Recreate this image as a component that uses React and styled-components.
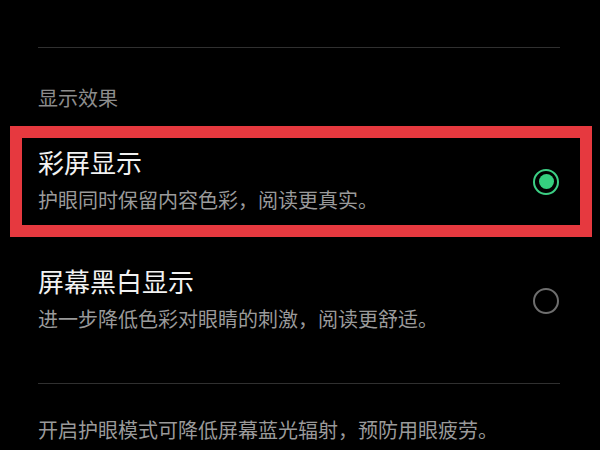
import React from 'react';
import styled, { createGlobalStyle } from 'styled-components';

const GlobalStyle = createGlobalStyle`
  html, body {
    margin: 0;
    padding: 0;
    background: #000;
  }
  body {
    font-family: "Noto Sans CJK SC", "Noto Sans", sans-serif;
  }
`;

const Page = styled.div`
  width: 600px;
  height: 450px;
  overflow: hidden;
  background: #000;
  padding-top: 47px;
  box-sizing: border-box;
`;

const Divider = styled.div`
  height: 1px;
  background: #303030;
  margin: ${(p) => (p.bottom ? '27px' : '0')} 40px 0 38px;
`;

const SectionTitle = styled.div`
  margin: 36px 0 14px 38px;
  font-size: 20px;
  line-height: 28px;
  color: #8c8c8c;
`;

const OptionList = styled.div`
  display: flex;
  flex-direction: column;
  gap: 8px;
  margin: 0 8px 0 10px;
`;

const Option = styled.div`
  display: flex;
  align-items: center;
  justify-content: space-between;
  height: 111px;
  box-sizing: border-box;
  border: 12px solid ${(p) => (p.highlighted ? '#e6393f' : 'transparent')};
  padding: 0 21px 0 16px;
`;

const OptionText = styled.div`
  display: flex;
  flex-direction: column;
  gap: 7px;
  margin-top: -4px;
`;

const OptionTitle = styled.div`
  font-size: 26px;
  line-height: 34px;
  color: #f2f2f2;
`;

const OptionDesc = styled.div`
  font-size: 20px;
  line-height: 28px;
  color: #9a9a9a;
`;

const Radio = styled.div`
  position: relative;
  width: 26px;
  height: 26px;
  box-sizing: border-box;
  border-radius: 50%;
  border: ${(p) => (p.checked ? '2.5px solid #3ccf84' : '2px solid #6e6e6e')};
  &::after {
    content: '';
    display: ${(p) => (p.checked ? 'block' : 'none')};
    position: absolute;
    left: 50%;
    top: 50%;
    width: 15px;
    height: 15px;
    margin: -7.5px 0 0 -7.5px;
    border-radius: 50%;
    background: #35d07f;
  }
`;

const Footnote = styled.div`
  margin: 32px 0 0 38px;
  font-size: 20px;
  line-height: 28px;
  color: #9a9a9a;
`;

const options = [
  { title: '彩屏显示', desc: '护眼同时保留内容色彩，阅读更真实。', checked: true },
  { title: '屏幕黑白显示', desc: '进一步降低色彩对眼睛的刺激，阅读更舒适。', checked: false },
];

export default function App() {
  return (
    <>
      <GlobalStyle />
      <Page>
        <Divider />
        <SectionTitle>显示效果</SectionTitle>
        <OptionList>
          {options.map((o) => (
            <Option key={o.title} highlighted={o.checked}>
              <OptionText>
                <OptionTitle>{o.title}</OptionTitle>
                <OptionDesc>{o.desc}</OptionDesc>
              </OptionText>
              <Radio checked={o.checked} />
            </Option>
          ))}
        </OptionList>
        <Divider bottom />
        <Footnote>开启护眼模式可降低屏幕蓝光辐射，预防用眼疲劳。</Footnote>
      </Page>
    </>
  );
}
